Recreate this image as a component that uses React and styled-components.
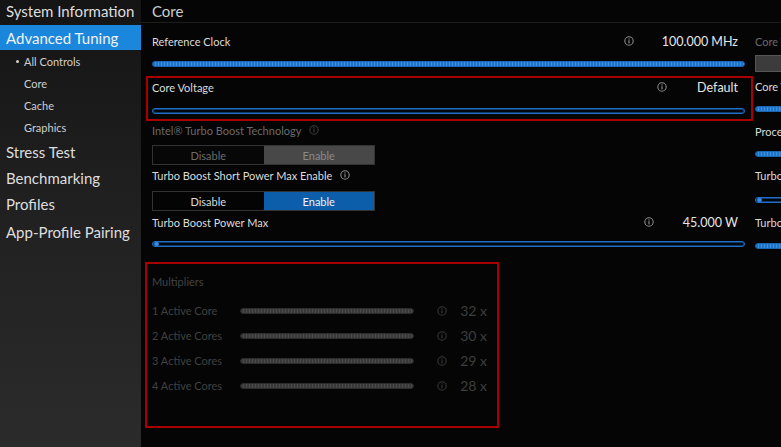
import React from "react";
import styled, { createGlobalStyle, css } from "styled-components";

const GlobalStyle = createGlobalStyle`
  html, body {
    margin: 0;
    padding: 0;
    background: #050505;
  }
  body {
    font-family: Lato, "Noto Sans", sans-serif;
  }
`;

const Screen = styled.div`
  display: flex;
  width: 781px;
  height: 447px;
  overflow: hidden;
  background: #050505;
`;

// left navigation

const Sidebar = styled.nav`
  width: 141px;
  flex-shrink: 0;
  background: linear-gradient(180deg, #141414 0%, #202020 45%, #2b2b2b 100%);
  display: flex;
  flex-direction: column;
`;

const NavItem = styled.div`
  height: ${({ $h }) => $h || 26}px;
  margin-bottom: ${({ $mb }) => $mb || 0}px;
  display: flex;
  align-items: center;
  padding-left: 6px;
  font-size: 15px;
  color: #dedede;
  white-space: nowrap;
  ${({ $active }) =>
    $active &&
    css`
      background: #1a87dc;
      color: #f2f2f2;
    `}
`;

const SubItem = styled.div`
  height: 22px;
  display: flex;
  align-items: center;
  padding-left: 24px;
  font-size: 11px;
  color: #cfcfcf;
  position: relative;
  ${({ $bullet }) =>
    $bullet &&
    css`
      &::before {
        content: "";
        position: absolute;
        left: 16px;
        top: 10px;
        width: 3px;
        height: 3px;
        border-radius: 50%;
        background: #cfcfcf;
      }
    `}
`;

// main area

const Main = styled.main`
  flex: 1;
  display: flex;
  flex-direction: column;
  min-width: 0;
`;

const Header = styled.div`
  height: 22px;
  border-bottom: 1px solid #1d1d1d;
  display: flex;
  align-items: center;
  padding-left: 11px;
  font-size: 15px;
  color: #cdcdcd;
`;

const Columns = styled.div`
  display: flex;
  gap: 10px;
  padding: 10px 0 0 11px;
`;

const LeftColumn = styled.div`
  width: 593px;
  flex-shrink: 0;
  display: flex;
  flex-direction: column;
`;

const RightColumn = styled.div`
  width: 200px;
  flex-shrink: 0;
  display: flex;
  flex-direction: column;
`;

const LabelRow = styled.div`
  height: 16px;
  margin-top: ${({ $mt }) => $mt || 0}px;
  display: flex;
  align-items: center;
  font-size: 11px;
  color: ${({ $dim }) => ($dim ? "#6a6a6a" : "#dcdcdc")};
  white-space: nowrap;
`;

const Label = styled.span`
  flex: ${({ $grow }) => ($grow ? 1 : "none")};
  display: flex;
  align-items: center;
  gap: 8px;
`;

const Value = styled.span`
  font-size: 12.5px;
  color: #e6e6e6;
  width: ${({ $w }) => $w}px;
  text-align: right;
  margin-right: 7px;
`;

const IconSlot = styled.span`
  display: flex;
  align-items: center;
  color: ${({ $color }) => $color || "#8a8a8a"};
`;

const Track = styled.div`
  position: relative;
  height: 6px;
  margin-top: ${({ $mt }) => $mt || 0}px;
  width: ${({ $w }) => ($w ? `${$w}px` : "auto")};
  border-radius: 3px;
  box-sizing: border-box;
  ${({ $variant }) =>
    $variant === "filled"
      ? css`
          background: repeating-linear-gradient(90deg, #1f74c8 0 2px, #3b8ee0 2px 3px);
          border: 1px solid #1a66b4;
        `
      : $variant === "gray"
      ? css`
          background: repeating-linear-gradient(90deg, #393939 0 2px, #4a4a4a 2px 3px);
          border: 1px solid #2c2c2c;
        `
      : css`
          background: #02070e;
          border: 1px solid #2270c6;
          box-shadow: inset 0 0 0 1px #0e3a6c;
        `}
`;

const Thumb = styled.span`
  position: absolute;
  left: 1px;
  top: 0;
  width: 5px;
  height: 4px;
  border-radius: 50%;
  background: #3a8ee2;
`;

const SelectBox = styled.div`
  position: absolute;
  inset: -1px;
  border: 2px solid #a80000;
  pointer-events: none;
`;

const Boxed = styled.div`
  position: relative;
  margin: ${({ $m }) => $m};
  padding: ${({ $p }) => $p};
  width: ${({ $w }) => ($w ? `${$w}px` : "auto")};
`;

const Toggle = styled.div`
  display: flex;
  width: 223px;
  height: 20px;
  margin-top: ${({ $mt }) => $mt || 0}px;
  border: 1px solid #333;
  box-sizing: border-box;
`;

const ToggleHalf = styled.div`
  flex: 1;
  display: flex;
  align-items: center;
  justify-content: center;
  font-size: 11px;
  ${({ $state }) =>
    $state === "on"
      ? css`
          background: #0c5eaa;
          color: #f2f2f2;
        `
      : $state === "grayOn"
      ? css`
          background: #484848;
          color: #8a8a8a;
        `
      : $state === "grayOff"
      ? css`
          background: #070707;
          color: #6a6a6a;
        `
      : css`
          background: #040404;
          color: #dcdcdc;
        `}
`;

const MultTitle = styled.div`
  height: 16px;
  display: flex;
  align-items: center;
  font-size: 11px;
  color: #424242;
  margin-bottom: 9px;
`;

const MultRow = styled.div`
  height: 25px;
  display: flex;
  align-items: center;
  font-size: 11px;
  color: #404040;
`;

const MultName = styled.span`
  width: 88px;
`;

const Spacer = styled.span`
  width: ${({ $w }) => $w}px;
`;

const MultValue = styled.span`
  width: 40px;
  text-align: right;
  font-size: 14px;
  color: #3e3e3e;
`;

const Dropdown = styled.div`
  height: 17px;
  margin-top: 6px;
  background: #3c3c3c;
  border: 1px solid #565656;
  box-sizing: border-box;
`;

function InfoIcon({ color }) {
  return (
    <IconSlot $color={color}>
      <svg width="10" height="10" viewBox="0 0 10 10" fill="none">
        <circle cx="5" cy="5" r="4.2" stroke="currentColor" strokeWidth="1.1" />
        <rect x="4.4" y="4.2" width="1.2" height="3.2" fill="currentColor" />
        <rect x="4.4" y="2.4" width="1.2" height="1.1" fill="currentColor" />
      </svg>
    </IconSlot>
  );
}

const multipliers = [
  { name: "1 Active Core", value: "32 x" },
  { name: "2 Active Cores", value: "30 x" },
  { name: "3 Active Cores", value: "29 x" },
  { name: "4 Active Cores", value: "28 x" },
];

export default function App() {
  return (
    <>
      <GlobalStyle />
      <Screen>
        <Sidebar>
          <NavItem $h={22} $mb={3}>System Information</NavItem>
          <NavItem $h={25} $active>Advanced Tuning</NavItem>
          <SubItem $bullet>All Controls</SubItem>
          <SubItem>Core</SubItem>
          <SubItem>Cache</SubItem>
          <SubItem>Graphics</SubItem>
          <NavItem $h={27}>Stress Test</NavItem>
          <NavItem>Benchmarking</NavItem>
          <NavItem>Profiles</NavItem>
          <NavItem $h={29}>App-Profile Pairing</NavItem>
        </Sidebar>

        <Main>
          <Header>Core</Header>
          <Columns>
            <LeftColumn>
              <LabelRow>
                <Label $grow>Reference Clock</Label>
                <InfoIcon />
                <Value $w={104}>100.000 MHz</Value>
              </LabelRow>
              <Track $variant="filled" $mt={12} />

              <Boxed $m="10px -7px 0 -5px" $p="2px 7px 6px 5px">
                <SelectBox />
                <LabelRow>
                  <Label $grow>Core Voltage</Label>
                  <InfoIcon />
                  <Value $w={71}>Default</Value>
                </LabelRow>
                <Track $mt={13} />
              </Boxed>

              <LabelRow $mt={2} $dim>
                <Label>
                  Intel® Turbo Boost Technology <InfoIcon color="#3d3d3d" />
                </Label>
              </LabelRow>
              <Toggle $mt={7}>
                <ToggleHalf $state="grayOff">Disable</ToggleHalf>
                <ToggleHalf $state="grayOn">Enable</ToggleHalf>
              </Toggle>

              <LabelRow $mt={2}>
                <Label>
                  Turbo Boost Short Power Max Enable <InfoIcon />
                </Label>
              </LabelRow>
              <Toggle $mt={8}>
                <ToggleHalf>Disable</ToggleHalf>
                <ToggleHalf $state="on">Enable</ToggleHalf>
              </Toggle>

              <LabelRow $mt={3}>
                <Label $grow>Turbo Boost Power Max</Label>
                <InfoIcon />
                <Value $w={84}>45.000 W</Value>
              </LabelRow>
              <Track $mt={11}>
                <Thumb />
              </Track>

              <Boxed $m="16px 0 0 -6px" $p="10px 0 29px 6px" $w={346}>
                <SelectBox />
                <MultTitle>Multipliers</MultTitle>
                {multipliers.map((m) => (
                  <MultRow key={m.name}>
                    <MultName>{m.name}</MultName>
                    <Track $variant="gray" $w={174} />
                    <Spacer $w={23} />
                    <InfoIcon color="#383838" />
                    <MultValue>{m.value}</MultValue>
                  </MultRow>
                ))}
              </Boxed>
            </LeftColumn>

            <RightColumn>
              <LabelRow $dim>Core Voltage Mode</LabelRow>
              <Dropdown />
              <LabelRow $mt={6}>Core Voltage Offset</LabelRow>
              <Track $variant="filled" $mt={12} />
              <LabelRow $mt={11}>Processor Core IccMax</LabelRow>
              <Track $variant="filled" $mt={12} />
              <LabelRow $mt={10}>Turbo Boost Short Power Max</LabelRow>
              <Track $mt={14}>
                <Thumb />
              </Track>
              <LabelRow $mt={11}>Turbo Boost Power Time Window</LabelRow>
              <Track $variant="filled" $mt={13} />
            </RightColumn>
          </Columns>
        </Main>
      </Screen>
    </>
  );
}
